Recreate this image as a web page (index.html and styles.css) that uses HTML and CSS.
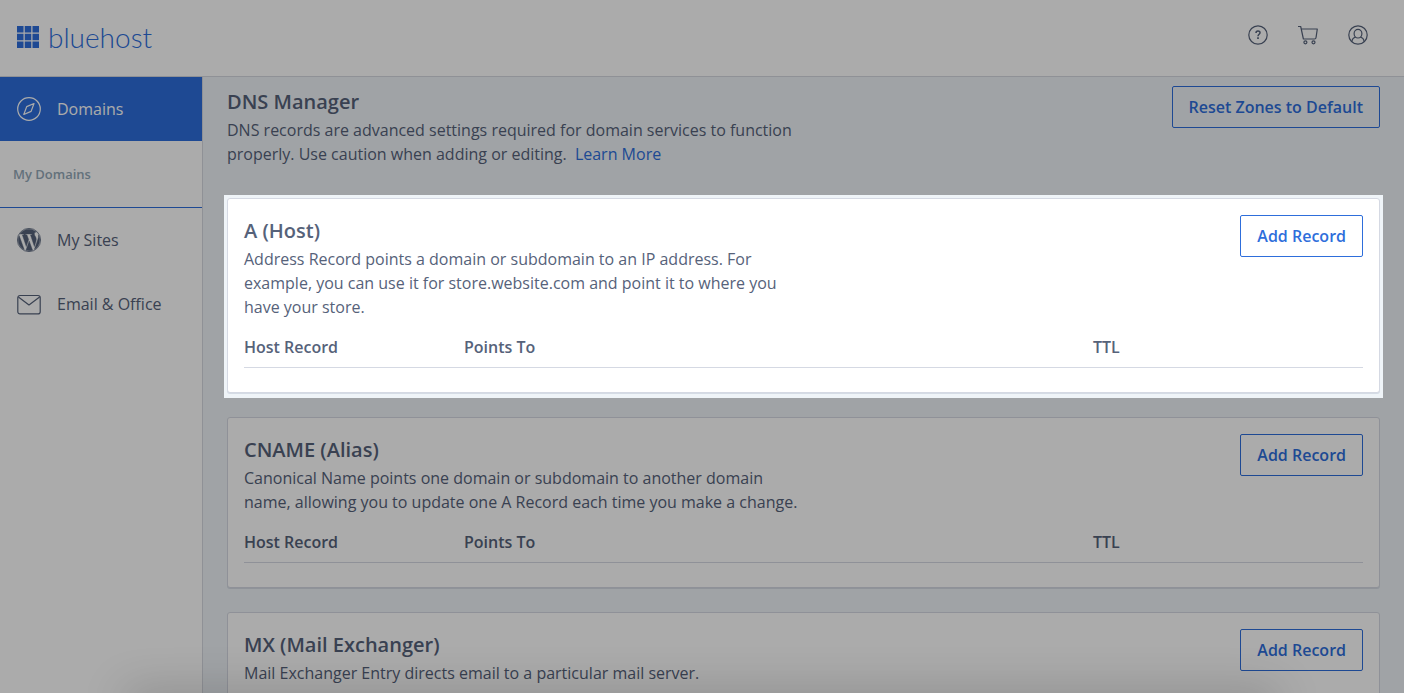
FILE: index.html
```html
<!DOCTYPE html>
<html lang="en">
<head>
<meta charset="utf-8">
<title>DNS Manager</title>
<link rel="stylesheet" href="styles.css">
</head>
<body>
<header class="topbar">
  <a class="brand" href="#">
    <svg class="brand-mark" width="22" height="22" viewBox="0 0 22 22" fill="currentColor" aria-hidden="true"><path d="M0 0h6.500v6.500H0zM7.750 0h6.500v6.500h-6.500zM15.500 0H22v6.500h-6.500zM0 7.750h6.500v6.500H0zM7.750 7.750h6.500v6.500h-6.500zM15.500 7.750H22v6.500h-6.500zM0 15.500h6.500V22H0zM7.750 15.500h6.500V22h-6.500zM15.500 15.500H22V22h-6.500z"/></svg>
    <span class="brand-name">bluehost</span>
  </a>
  <div class="actions">
    <button class="icon-button" type="button" aria-label="Help">
      <svg width="20" height="20" viewBox="0 0 20 20" fill="none" stroke="currentColor" stroke-width="1.2"><circle cx="10" cy="10" r="9.2"/><path d="M8 8c0-2.600 4-2.600 4-.2 0 1.500-2 1.500-2 3.400" stroke-width="1.500"/><path d="M10 12.300v1.700" stroke-width="1.700"/></svg>
    </button>
    <button class="icon-button" type="button" aria-label="Cart">
      <svg width="20" height="20" viewBox="0 0 20 20" fill="none" stroke="currentColor" stroke-width="1.200" stroke-linejoin="round"><path d="M0 1.500h2.700L5.400 14h11.800M3.300 4h16l-1.200 8.200q-.1 1.800-1.600 1.800"/><circle cx="7.400" cy="17.300" r="1.500"/><circle cx="15.500" cy="17.300" r="1.500"/></svg>
    </button>
    <button class="icon-button" type="button" aria-label="Account">
      <svg width="20" height="20" viewBox="0 0 20 20" fill="none" stroke="currentColor" stroke-width="1.200"><circle cx="10" cy="10" r="9.200"/><ellipse cx="10" cy="8.700" rx="3.900" ry="4.300"/><path d="M7.600 12.200c-2.300.5-3.400 1.400-3.700 4.600M12.400 12.200c2.300.5 3.400 1.400 3.700 4.600"/></svg>
    </button>
  </div>
</header>
<div class="layout">
  <nav class="sidebar">
    <a class="nav-item nav-item-active" href="#">
      <svg width="24" height="24" viewBox="0 0 24 24" fill="none" stroke="currentColor" stroke-width="1.200" stroke-linejoin="round"><circle cx="12" cy="12" r="11.300"/><path d="M17 6.500l-7.300 3.100L6.800 17.500l7.300-3.100z"/></svg>
      Domains
    </a>
    <a class="nav-sub" href="#">My Domains</a>
    <a class="nav-item" href="#">
      <svg width="24" height="24" viewBox="0 0 24 24" fill="currentColor" stroke="currentColor" stroke-width=".4"><path d="M21.469 6.825c.84 1.537 1.318 3.300 1.318 5.175 0 3.979-2.156 7.456-5.363 9.325l3.295-9.527c.615-1.540.82-2.771.82-3.864 0-.405-.026-.78-.07-1.110m-7.981.105c.647-.03 1.232-.105 1.232-.105.582-.075.514-.93-.067-.899 0 0-1.755.135-2.880.135-1.064 0-2.850-.15-2.850-.15-.585-.03-.661.855-.075.885 0 0 .54.061 1.125.09l1.680 4.605-2.370 7.080L5.354 6.900c.649-.03 1.234-.1 1.234-.1.585-.075.516-.93-.065-.896 0 0-1.746.138-2.874.138-.2 0-.438-.008-.69-.015C4.911 3.150 8.235 1.215 12 1.215c2.809 0 5.365 1.072 7.286 2.833-.046-.003-.091-.009-.141-.009-1.060 0-1.812.923-1.812 1.914 0 .89.513 1.643 1.060 2.531.411.72.89 1.643.89 2.977 0 .915-.354 1.994-.821 3.479l-1.075 3.585-3.900-11.610.001.014zM12 22.784c-1.059 0-2.081-.153-3.048-.437l3.237-9.406 3.315 9.087c.024.053.05.101.078.149-1.120.393-2.325.609-3.582.609M1.211 12c0-1.564.336-3.050.935-4.390L7.290 21.709C3.694 19.960 1.212 16.271 1.212 12"/><circle cx="12" cy="12" r="11.600" fill="none" stroke-width=".8"/></svg>
      My Sites
    </a>
    <a class="nav-item" href="#">
      <svg width="24" height="24" viewBox="0 0 24 24" fill="none" stroke="currentColor" stroke-width="1.200" stroke-linejoin="round"><rect x=".8" y="3.500" width="22.400" height="18.400" rx="2.200"/><path d="M1.400 5L12 12.900 22.600 5"/></svg>
      Email &amp; Office
    </a>
  </nav>
  <main class="content">
    <section class="intro">
      <div class="copy">
        <h1 class="title">DNS Manager</h1>
        <p class="text">DNS records are advanced settings required for domain services to function properly. Use caution when adding or editing. <a class="learn" href="#">Learn More</a></p>
      </div>
      <button class="button" type="button">Reset Zones to Default</button>
    </section>
    <section class="card card-spotlight">
      <div class="card-head">
        <div class="copy">
          <h2 class="title">A (Host)</h2>
          <p class="text">Address Record points a domain or subdomain to an IP address. For example, you can use it for store.website.com and point it to where you have your store.</p>
        </div>
        <button class="button" type="button">Add Record</button>
      </div>
      <table class="records">
        <thead><tr><th class="col-host" scope="col">Host Record</th><th scope="col">Points To</th><th class="col-ttl" scope="col">TTL</th></tr></thead>
      </table>
    </section>
    <section class="card">
      <div class="card-head">
        <div class="copy">
          <h2 class="title">CNAME (Alias)</h2>
          <p class="text">Canonical Name points one domain or subdomain to another domain name, allowing you to update one A Record each time you make a change.</p>
        </div>
        <button class="button" type="button">Add Record</button>
      </div>
      <table class="records">
        <thead><tr><th class="col-host" scope="col">Host Record</th><th scope="col">Points To</th><th class="col-ttl" scope="col">TTL</th></tr></thead>
      </table>
    </section>
    <section class="card">
      <div class="card-head">
        <div class="copy">
          <h2 class="title">MX (Mail Exchanger)</h2>
          <p class="text">Mail Exchanger Entry directs email to a particular mail server.</p>
        </div>
        <button class="button" type="button">Add Record</button>
      </div>
    </section>
  </main>
</div>
</body>
</html>
```
FILE: styles.css
```css
* { box-sizing: border-box; }

body {
  position: relative;
  margin: 0;
  height: 100vh;
  overflow: hidden;
  display: flex;
  flex-direction: column;
  background: #fff;
  color: #56627a;
  font: 16px/24px "Open Sans", "Noto Sans", sans-serif;
}

/* Soft shade rising from the bottom edge of the window */
body::after {
  content: "";
  position: absolute;
  z-index: 11;
  top: 100%;
  left: 9%;
  right: 9%;
  height: 20px;
  box-shadow: 0 0 44px 0 rgba(0, 0, 0, 0.26);
  pointer-events: none;
}

a { color: #2e6edb; text-decoration: none; }

.topbar {
  display: flex;
  flex: none;
  align-items: center;
  justify-content: space-between;
  padding: 0 36px 0 17px;
  height: 77px;
  border-bottom: 1px solid #d5d9e0;
}

.brand { display: flex; align-items: center; gap: 9px; padding-bottom: 2px; }
.brand-name {
  font-family: Lato, "Open Sans", sans-serif;
  font-size: 28px;
  font-weight: 300;
  line-height: 32px;
}

.actions { display: flex; gap: 30px; padding-bottom: 7px; }
.icon-button {
  display: flex;
  padding: 0;
  border: 0;
  background: none;
  color: #56627a;
}

.layout { display: flex; flex: 1; min-height: 0; }

.sidebar {
  display: flex;
  flex: none;
  flex-direction: column;
  width: 203px;
  border-right: 1px solid #d5d9e0;
}

.nav-item {
  display: flex;
  align-items: center;
  gap: 16px;
  height: 64px;
  padding: 0 17px;
  color: #56627a;
}
.nav-item-active { background: #2e6edb; color: #fff; }

.nav-sub {
  display: flex;
  align-items: center;
  height: 67px;
  padding: 0 13px;
  border-bottom: 1px solid #2e6edb;
  color: #94a9b8;
  font-size: 13px;
  font-weight: 600;
}

.content {
  display: flex;
  flex: 1;
  flex-direction: column;
  gap: 24px;
  min-width: 0;
  padding: 9px 24px 0;
  background: #eff4f8;
}

.intro, .card-head {
  display: flex;
  align-items: flex-start;
  justify-content: space-between;
}
.intro { padding-bottom: 8px; }

.copy { max-width: 568px; }
.title { margin: 0; font-size: 20px; font-weight: 600; line-height: 32px; }
.text { margin: 0; }
.learn { margin-left: 4px; }

.button {
  flex: none;
  height: 42px;
  padding: 0 16px;
  border: 1px solid #2e6edb;
  border-radius: 2px;
  background: none;
  color: #2e6edb;
  font: inherit;
  font-weight: 600;
}

.card {
  flex: none;
  padding: 16px 16px 24px;
  border: 1px solid #d5d9e3;
  border-radius: 3px;
  background: #fff;
  box-shadow: 0 1px 0 #d5dce5;
}

/* Dims everything outside the highlighted card */
.card-spotlight { position: relative; }
.card-spotlight::after {
  content: "";
  position: absolute;
  z-index: 10;
  inset: -4px -4px -6px;
  box-shadow: 0 0 0 4000px rgba(0, 0, 0, 0.33);
  pointer-events: none;
}

.records {
  width: 100%;
  margin-top: 8px;
  border-collapse: separate;
  border-spacing: 0;
  table-layout: fixed;
}
.records th {
  padding: 8px 0;
  border-bottom: 1px solid #d5d9e3;
  font-weight: 600;
  text-align: left;
}
.col-host { width: 220px; }
.col-ttl { width: 270px; }
```
